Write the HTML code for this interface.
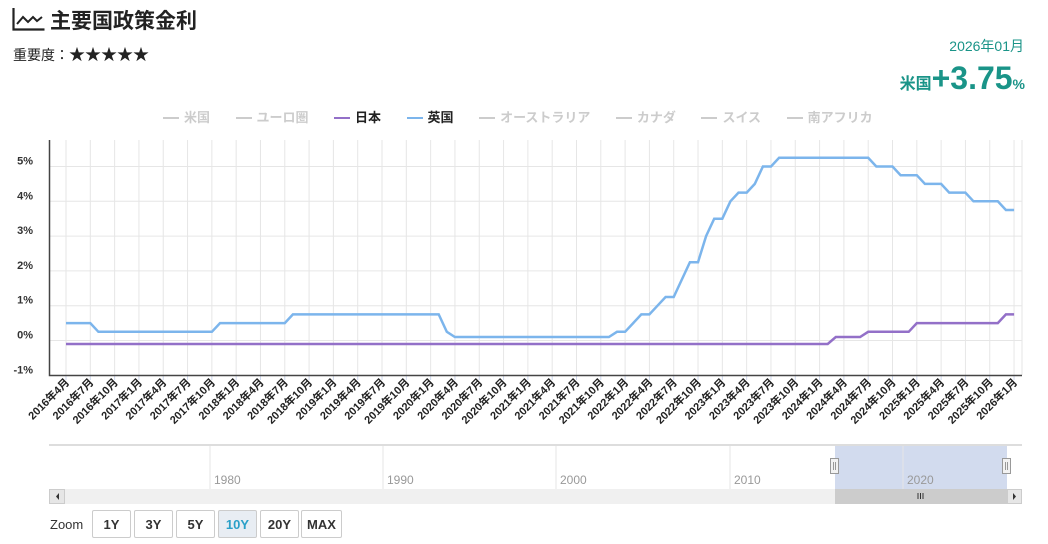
<!DOCTYPE html>
<html><head><meta charset="utf-8"><style>
body{margin:0;width:1048px;height:544px;background:#fff;font-family:"Liberation Sans","Noto Sans CJK JP",sans-serif;position:relative;overflow:hidden}
.a{position:absolute;white-space:nowrap}
.btn{position:absolute;top:510px;height:28px;width:39px;border:1px solid #ccc;border-radius:2px;background:#fff;font:bold 13px "Liberation Sans",sans-serif;color:#333;text-align:center;line-height:28px;box-sizing:border-box}
.lg span{display:inline-block;margin-right:25.5px}
.lg i{display:inline-block;width:16px;height:2px;background:#ccc;vertical-align:middle;margin-right:5px;position:relative;top:-1px}
</style></head><body>
<svg class="a" style="left:12px;top:7px" width="34" height="25" viewBox="0 0 34 25"><path d="M1.5 1v21.5h31" fill="none" stroke="#222" stroke-width="2.2"/><path d="M5 17l6-7 5 5 5-5 4 4 5-4" fill="none" stroke="#222" stroke-width="2"/></svg>
<div class="a" style="left:50px;top:5px;font-size:21px;font-weight:bold;color:#222">主要国政策金利</div>
<div class="a" style="left:13px;top:41px;font-size:14px;color:#222">重要度：<span style="font-size:16px">★★★★★</span></div>
<div class="a" style="right:24px;top:36px;font-size:14px;color:#1a9488">2026年01月</div>
<div class="a" style="right:23px;top:60px;color:#1a9488;font-weight:bold"><span style="font-size:16px">米国</span><span style="font-size:32px">+3.75</span><span style="font-size:14px">%</span></div>
<div class="a lg" style="left:163px;top:107px;font-size:13px;font-weight:bold;color:#ccc">
<span><i></i>米国</span><span><i></i>ユーロ圏</span><span style="color:#222"><i style="background:#9370c8"></i>日本</span><span style="color:#222"><i style="background:#7cb5ec"></i>英国</span><span><i></i>オーストラリア</span><span><i></i>カナダ</span><span><i></i>スイス</span><span><i></i>南アフリカ</span></div>
<svg id="c" class="a" style="left:0;top:0" width="1048" height="544"></svg>
<div class="a" style="left:50px;top:517px;font-size:13px;color:#333">Zoom</div>
<div class="btn" style="left:92px">1Y</div><div class="btn" style="left:134px">3Y</div><div class="btn" style="left:176px">5Y</div><div class="btn" style="left:218px;background:#e8edf3;color:#2aa0c8">10Y</div><div class="btn" style="left:260px">20Y</div><div class="btn" style="left:301px;width:41px">MAX</div>
<script>
var s='';
function X(m){return 66+m*8.103}
function Y(v){return 340.5-v*34.8}
for(var i=0;i<6;i++){var y=Y(5-i);s+='<line x1="50" x2="1022" y1="'+y+'" y2="'+y+'" stroke="#e6e6e6" stroke-width="1"/>';}
for(var q=0;q<=39;q++){var x=X(q*3);s+='<line x1="'+x+'" x2="'+x+'" y1="140" y2="375" stroke="#e6e6e6"/><line x1="'+x+'" x2="'+x+'" y1="375" y2="380" stroke="#ccd6eb"/>';
var yr=2016+Math.floor((3+q*3)/12),mo=((3+q*3)%12)+1;
s+='<text transform="translate('+(x+4)+',383) rotate(-45)" text-anchor="end" font-size="11" font-weight="bold" fill="#222" font-family="Liberation Sans,Noto Sans CJK JP,sans-serif">'+yr+'年'+mo+'月</text>';}
s+='<line x1="1022" x2="1022" y1="140" y2="375" stroke="#e6e6e6"/>';
s+='<path d="M49.5 140V375.5H1022" fill="none" stroke="#444" stroke-width="1.5"/>';
var lab=['5%','4%','3%','2%','1%','0%','-1%'];
for(i=0;i<7;i++)s+='<text x="33" y="'+(Y(5-i)-2)+'" text-anchor="end" font-size="11" font-weight="bold" fill="#333" font-family="Liberation Sans,sans-serif">'+lab[i]+'</text>';
function ser(ch){var pts=[],v=ch[0][1],k=0;for(var m=0;m<=117;m++){while(k<ch.length&&ch[k][0]<=m){v=ch[k][1];k++}pts.push(X(m).toFixed(1)+' '+Y(v).toFixed(1))}return 'M'+pts.join('L')}
function mi(y,m){return (y-2016)*12+(m-4)}
var uk=[[0,.5],[mi(2016,8),.25],[mi(2017,11),.5],[mi(2018,8),.75],[mi(2020,3),.25],[mi(2020,4),.1],[mi(2021,12),.25],[mi(2022,2),.5],[mi(2022,3),.75],[mi(2022,5),1],[mi(2022,6),1.25],[mi(2022,8),1.75],[mi(2022,9),2.25],[mi(2022,11),3],[mi(2022,12),3.5],[mi(2023,2),4],[mi(2023,3),4.25],[mi(2023,5),4.5],[mi(2023,6),5],[mi(2023,8),5.25],[mi(2024,8),5],[mi(2024,11),4.75],[mi(2025,2),4.5],[mi(2025,5),4.25],[mi(2025,8),4],[mi(2025,12),3.75]];
var jp=[[0,-.1],[mi(2024,3),.1],[mi(2024,7),.25],[mi(2025,1),.5],[mi(2025,12),.75]];
s+='<path d="'+ser(uk)+'" fill="none" stroke="#7cb5ec" stroke-width="2.5"/>';
s+='<path d="'+ser(jp)+'" fill="none" stroke="#9370c8" stroke-width="2.5"/>';
s+='<line x1="49" x2="1022" y1="445" y2="445" stroke="#ddd" stroke-width="2"/>';
var yrs=[[210,'1980'],[383,'1990'],[556,'2000'],[730,'2010'],[903,'2020']];
s+='<rect x="835" y="446" width="172" height="43" fill="#d2dbee"/>';
yrs.forEach(function(a){s+='<line x1="'+a[0]+'" x2="'+a[0]+'" y1="446" y2="489" stroke="#e6e6e6"/><text x="'+(a[0]+4)+'" y="484" font-size="12" fill="#999" font-family="Liberation Sans,sans-serif">'+a[1]+'</text>'});
s+='<rect x="49" y="489" width="973" height="15" fill="#f0f0f0"/><rect x="49.5" y="489.5" width="15" height="14" fill="#e6e6e6" stroke="#ccc"/><path d="M59 493v7l-3-3.5z" fill="#333"/>';
s+='<rect x="835" y="489" width="172" height="15" fill="#ccc"/><path d="M918 493v6M920.5 493v6M923 493v6" stroke="#333"/>';
s+='<rect x="1007.5" y="489.5" width="14" height="14" fill="#e6e6e6" stroke="#ccc"/><path d="M1013 493v7l3-3.5z" fill="#333"/>';
[835,1007].forEach(function(x){s+='<rect x="'+(x-4.5)+'" y="458.5" width="8" height="15" fill="#f2f2f2" stroke="#999"/><path d="M'+(x-1.5)+' 462v8M'+(x+0.5)+' 462v8" stroke="#999"/>'});
document.getElementById('c').innerHTML=s;
</script>
</body></html>
